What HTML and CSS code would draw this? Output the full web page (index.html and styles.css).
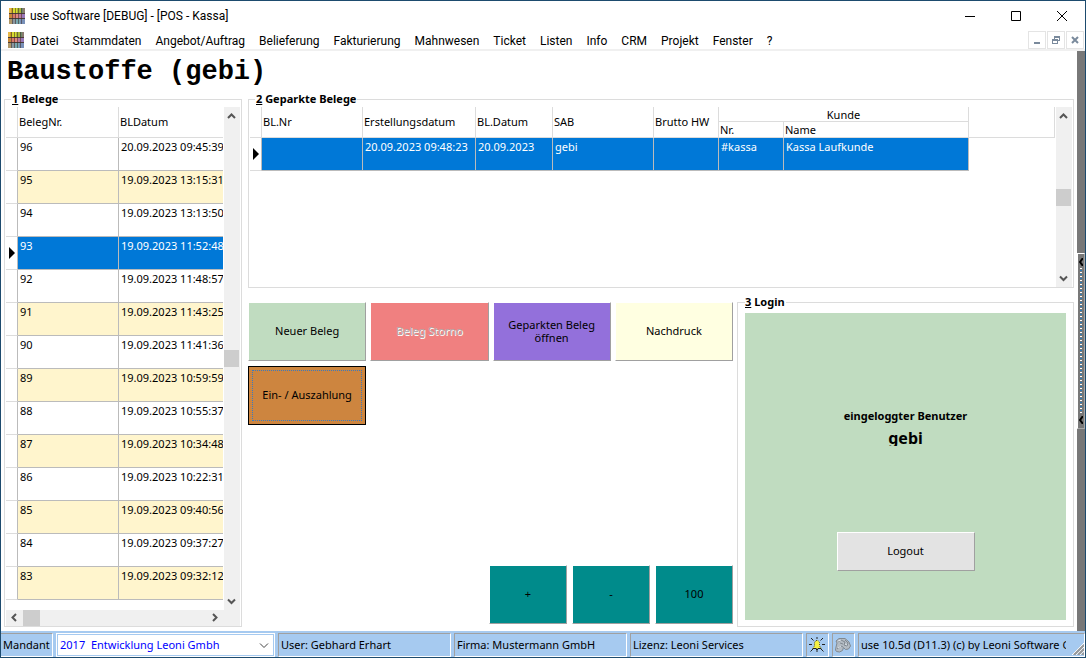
FILE: index.html
```html
<!DOCTYPE html>
<html lang="de">
<head>
<meta charset="utf-8">
<title>use Software [DEBUG] - [POS - Kassa]</title>
<link rel="stylesheet" href="styles.css">
</head>
<body>
<svg class="defs" aria-hidden="true">
  <symbol id="logo" viewBox="0 0 16 16">
    <rect width="16" height="16" fill="#8a8078"/>
    <path fill="#e8b848" d="M0 0h2v5H0z"/><path fill="#c9a02c" d="M2 0h2v5H2z"/><path fill="#d8dc30" d="M4 0h4v5H4z"/><path fill="#a8b838" d="M8 0h4v5H8z"/><path fill="#6d8a68" d="M12 0h2v5h-2z"/><path fill="#8a7a70" d="M14 0h2v5h-2z"/>
    <path fill="#c88838" d="M0 6h3v4H0z"/><path fill="#d87868" d="M3 6h4v4H3z"/><path fill="#e08880" d="M7 6h3v4H7z"/><path fill="#b878a0" d="M10 6h3v4h-3z"/><path fill="#9878b8" d="M13 6h3v4h-3z"/>
    <path fill="#b09868" d="M0 11h3v5H0z"/><path fill="#8a98a0" d="M3 11h4v5H3z"/><path fill="#78a8b0" d="M7 11h4v5H7z"/><path fill="#7890b8" d="M11 11h5v5h-5z"/>
    <path fill="#3c2c28" fill-opacity=".8" d="M0 5h16v1H0zM0 10h16v1H0z"/>
    <path fill="#3c2c28" fill-opacity=".55" d="M3 0h1v16H3zM6 0h1v16H6zM9 0h1v16H9zM12 0h1v16h-1z"/>
  </symbol>
  <symbol id="up" viewBox="0 0 16 17"><path fill="none" stroke="#555" stroke-width="2" d="M4 11l3.500-3.500L11 11"/></symbol>
  <symbol id="down" viewBox="0 0 16 17"><path fill="none" stroke="#555" stroke-width="2" d="M4 6.500L7.500 10 11 6.500"/></symbol>
  <symbol id="left" viewBox="0 0 17 16"><path fill="none" stroke="#555" stroke-width="2" d="M10 4L6.500 7.500 10 11"/></symbol>
  <symbol id="right" viewBox="0 0 17 16"><path fill="none" stroke="#555" stroke-width="2" d="M6 4l3.500 3.500L6 11"/></symbol>
  <symbol id="marker" viewBox="0 0 6 12"><path d="M0 0l6 6-6 6z"/></symbol>
</svg>
<div class="window">
  <header class="titlebar">
    <svg class="logo"><use href="#logo"/></svg>
    <span class="caption">use Software [DEBUG] - [POS - Kassa]</span>
    <button class="sysbtn" aria-label="Minimieren"><svg width="10" height="10"><path d="M0 5h10v1H0z"/></svg></button>
    <button class="sysbtn" aria-label="Maximieren"><svg width="10" height="10"><path fill="none" stroke="#000" d="M.5.5h9v9h-9z"/></svg></button>
    <button class="sysbtn" aria-label="Schließen"><svg width="10" height="10"><path stroke="#000" d="M0 0l10 10M10 0L0 10"/></svg></button>
  </header>
  <nav class="menubar">
    <svg class="logo"><use href="#logo"/></svg>
    <button>Datei</button><button>Stammdaten</button><button>Angebot/Auftrag</button><button>Belieferung</button><button>Fakturierung</button><button>Mahnwesen</button><button>Ticket</button><button>Listen</button><button>Info</button><button>CRM</button><button>Projekt</button><button>Fenster</button><button>?</button>
    <span class="mdi">
      <button aria-label="Fenster minimieren"><svg width="8" height="8"><path fill="#7a8a9c" d="M1 6h6v2H1z"/></svg></button>
      <button aria-label="Fenster wiederherstellen"><svg width="8" height="8"><path fill="#7a8a9c" d="M2 0h6v5H6V4h1V2H3v1H2zM0 3h6v5H0zM1 5v2h4V5z" fill-rule="evenodd"/></svg></button>
      <button aria-label="Fenster schließen"><svg width="8" height="8"><path stroke="#7a8a9c" stroke-width="2" d="M1 1l6 6M7 1L1 7"/></svg></button>
    </span>
  </nav>
  <div class="client">
    <main class="form">
      <h1>Baustoffe (gebi)</h1>
      <div class="columns">
        <fieldset class="group receipts">
          <legend><u>1</u> Belege</legend>
          <div class="scroller">
            <div class="viewport">
              <table class="grid">
                <colgroup><col class="c-mark"><col class="c-nr"><col></colgroup>
                <thead><tr><th></th><th>BelegNr.</th><th>BLDatum</th></tr></thead>
                <tbody>
                  <tr><td></td><td>96</td><td>20.09.2023 09:45:39</td></tr>
                  <tr><td></td><td>95</td><td>19.09.2023 13:15:31</td></tr>
                  <tr><td></td><td>94</td><td>19.09.2023 13:13:50</td></tr>
                  <tr class="selected"><td><svg class="marker"><use href="#marker"/></svg></td><td>93</td><td>19.09.2023 11:52:48</td></tr>
                  <tr><td></td><td>92</td><td>19.09.2023 11:48:57</td></tr>
                  <tr><td></td><td>91</td><td>19.09.2023 11:43:25</td></tr>
                  <tr><td></td><td>90</td><td>19.09.2023 11:41:36</td></tr>
                  <tr><td></td><td>89</td><td>19.09.2023 10:59:59</td></tr>
                  <tr><td></td><td>88</td><td>19.09.2023 10:55:37</td></tr>
                  <tr><td></td><td>87</td><td>19.09.2023 10:34:48</td></tr>
                  <tr><td></td><td>86</td><td>19.09.2023 10:22:31</td></tr>
                  <tr><td></td><td>85</td><td>19.09.2023 09:40:56</td></tr>
                  <tr><td></td><td>84</td><td>19.09.2023 09:37:27</td></tr>
                  <tr><td></td><td>83</td><td>19.09.2023 09:32:12</td></tr>
                </tbody>
              </table>
            </div>
            <div class="vbar"><svg><use href="#up"/></svg><i></i><b></b><i></i><svg><use href="#down"/></svg></div>
          </div>
          <div class="hbar"><svg><use href="#left"/></svg><b></b><i></i><svg><use href="#right"/></svg></div>
        </fieldset>
        <div class="workspace">
          <fieldset class="group parked">
            <legend><u>2</u> Geparkte Belege</legend>
            <div class="scroller">
              <div class="viewport">
                <table class="grid wide">
                  <colgroup><col class="c-mark"><col class="c-nr"><col class="c-created"><col class="c-date"><col class="c-sab"><col class="c-sum"><col class="c-cust"><col class="c-name"><col></colgroup>
                  <thead>
                    <tr><th rowspan="2"></th><th rowspan="2">BL.Nr</th><th rowspan="2">Erstellungsdatum</th><th rowspan="2">BL.Datum</th><th rowspan="2">SAB</th><th rowspan="2">Brutto HW</th><th colspan="2" class="band">Kunde</th><th rowspan="2"></th></tr>
                    <tr><th>Nr.</th><th>Name</th></tr>
                  </thead>
                  <tbody>
                    <tr class="selected"><td><svg class="marker"><use href="#marker"/></svg></td><td></td><td>20.09.2023 09:48:23</td><td>20.09.2023</td><td>gebi</td><td></td><td>#kassa</td><td>Kassa Laufkunde</td><td class="filler"></td></tr>
                  </tbody>
                </table>
              </div>
              <div class="vbar"><svg><use href="#up"/></svg><i></i><b></b><i></i><svg><use href="#down"/></svg></div>
            </div>
          </fieldset>
          <div class="lower">
            <div class="actions">
              <div class="tiles">
                <button class="tile green">Neuer Beleg</button>
                <button class="tile red" disabled>Beleg Storno</button>
                <button class="tile purple">Geparkten Beleg öffnen</button>
                <button class="tile cream">Nachdruck</button>
                <button class="tile orange"><span>Ein- / Auszahlung</span></button>
              </div>
              <div class="keys">
                <button class="tile teal">+</button>
                <button class="tile teal">-</button>
                <button class="tile teal">100</button>
              </div>
            </div>
            <fieldset class="group login">
              <legend><u>3</u> Login</legend>
              <div class="panel">
                <div class="who">eingeloggter Benutzer</div>
                <div class="user">gebi</div>
                <button class="logout">Logout</button>
              </div>
            </fieldset>
          </div>
        </div>
      </div>
    </main>
    <aside class="splitter">
      <div class="handle">
        <svg width="4" height="8"><path fill="none" stroke="#000" stroke-width="2" d="M4 0L1 4l3 4"/></svg>
        <span class="dots"></span>
        <svg width="4" height="8"><path fill="none" stroke="#000" stroke-width="2" d="M4 0L1 4l3 4"/></svg>
      </div>
    </aside>
  </div>
  <footer class="status">
    <label class="cell s-label" for="mandant">Mandant</label>
    <span class="combo">
      <select id="mandant"><option>2017&nbsp; Entwicklung Leoni Gmbh</option></select>
      <svg width="10" height="6"><path fill="none" stroke="#444" d="M1 .5l4 4 4-4"/></svg>
    </span>
    <span class="cell s-info">User: Gebhard Erhart</span>
    <span class="cell s-info">Firma: Mustermann GmbH</span>
    <span class="cell s-info">Lizenz: Leoni Services</span>
    <span class="cell s-icon"><svg width="16" height="16" viewBox="0 0 16 16"><path stroke="#222" d="M2 1l2.500 2.500M14 1l-2.500 2.500M0 7.500h3M13 7.500h3M1.500 14.500L4 12M14.500 14.500L12 12M8 0v2M8 13v2"/><path fill="#f4f040" stroke="#55552a" stroke-dasharray="1 1" d="M7 3.500h2l1.500 2v3.500l2 2.500h-9l2-2.500V5.500z"/><path fill="#222" d="M4 11h3v1H4zM9 11h3v1H9zM7 12h2v1H7z"/></svg></span>
    <span class="cell s-icon"><svg width="16" height="16" viewBox="0 0 16 16"><path fill="#b4bcc4" stroke="#808890" d="M1 10l1-4-1-2 3-2.500 6 0 4 3.500 1.500 4-2 3-3 .5-2-2-1 3-3 1.500-3-.5L.5 13z"/><path fill="none" stroke="#808890" d="M3 5l3-2 4 2-1 3 3 1 1-3-3-3M2 12l4-3 2 1M5 6l3 1"/><path stroke="#dde4ea" d="M3 4l3-1M3 11l3-2M10 7l2 1"/></svg></span>
    <span class="cell s-version"><span>use 10.5d (D11.3) (c) by Leoni Software GmbH</span><svg width="12" height="12"><path stroke="#fff" stroke-width="1" d="M0 12L12 0M4 12l8-8M8 12l4-4"/><path stroke="#999" stroke-width="2" d="M2 12L12 2M6 12l6-6M10 12l2-2"/></svg></span>
  </footer>
</div>
</body>
</html>
```
FILE: styles.css
```css
* { box-sizing: border-box; }
body { margin: 0; background: #fff; color: #000; font: 11px/13px "Noto Sans", sans-serif; }
button, select { font: inherit; color: inherit; padding: 0; border: 0; background: none; border-radius: 0; }
svg { display: block; }
.defs { position: absolute; width: 0; height: 0; }
.window { display: flex; flex-direction: column; min-height: 100vh; border: 1px solid #1d4b6e; }

.titlebar { display: flex; align-items: center; height: 29px; padding-left: 8px; font: 12px/16px Roboto, sans-serif; }
.logo { width: 16px; height: 16px; flex: none; }
.caption { flex: 1; padding-left: 5px; }
.sysbtn { width: 46px; height: 28px; display: grid; place-items: center; }

.menubar { display: flex; align-items: center; gap: 14px; height: 21px; padding: 1px 0 0 7px; border-bottom: 2px solid #f0f0f0; font: 12px/18px Roboto, sans-serif; white-space: nowrap; }
.menubar > button { padding-top: 2px; }
.menubar .logo { margin-right: -7px; }
.mdi { display: flex; gap: 1px; margin-left: auto; padding-right: 1px; }
.mdi button { width: 18px; height: 18px; border: 1px solid #e4e4e4; display: grid; place-items: center; }

.client { flex: 1; display: flex; }
.form { flex: 1; min-width: 0; display: flex; flex-direction: column; padding: 0 3px 4px; }
h1 { margin: 0; padding: 2px 3px 0; font: bold 27px/39px "Liberation Mono", monospace; }
.columns { flex: 1; display: flex; gap: 6px; }
.workspace { flex: 1; min-width: 0; display: flex; flex-direction: column; gap: 7px; }

.group { margin: 0; min-width: 0; padding: 0 1px; border: 1px solid #dcdcdc; display: flex; flex-direction: column; }
legend { margin-left: 5px; padding: 0 1px; font-weight: bold; line-height: 14px; }
.receipts { width: 238px; }
.scroller { flex: 1; min-height: 0; display: flex; padding-top: 1px; }
.parked .scroller { min-height: 181px; }
.viewport { flex: 1; min-width: 0; overflow: hidden; padding-right: 1px; }

.grid { width: 100%; table-layout: fixed; border-collapse: separate; border-spacing: 0; }
.grid th, .grid td { padding: 0 1px; overflow: hidden; white-space: nowrap; text-align: left; font-weight: normal; }
.grid th { height: 31px; padding-bottom: 2px; border-right: 1px solid #dcdcdc; border-bottom: 1px solid #dcdcdc; }
.receipts th:last-child, .receipts td:last-child { border-right: 0; }
.grid td { height: 33px; padding: 2px 0 0 2px; vertical-align: top; border-right: 1px solid #bbb; border-bottom: 1px solid #bbb; }
.grid td:first-child { padding: 0 0 0 3px; vertical-align: middle; border-bottom-color: #dcdcdc; }
.receipts tbody tr:nth-child(even) td:not(:first-child) { background: #fff5cd; }
.grid .selected td:not(:first-child) { background: #0078d7 !important; color: #fff; }
.grid .selected .filler { visibility: hidden; }
.wide th[rowspan] { height: 31px; }
.wide th:not([rowspan]) { height: 16px; padding-bottom: 0; }
.wide .band { height: 15px !important; text-align: center; }
.marker { width: 6px; height: 12px; }
.c-mark { width: 12px; }
.c-nr { width: 101px; }
.c-created { width: 113px; }
.c-date { width: 77px; }
.c-sab { width: 101px; }
.c-sum, .c-cust { width: 65px; }
.c-name { width: 185px; }

.vbar, .hbar { display: flex; background: #f0f0f0; }
.vbar { width: 16px; flex-direction: column; }
.vbar svg { width: 16px; height: 17px; }
.hbar svg { width: 17px; height: 16px; }
.hbar { padding-right: 16px; }
.vbar i, .hbar i { flex: 1; }
.vbar b { height: 17px; background: #cdcdcd; margin-right: 1px; }
.hbar b { width: 17px; background: #cdcdcd; }

.lower { flex: 1; display: grid; grid-template-columns: 485fr 337fr; gap: 4px; }
.actions { display: flex; flex-direction: column; justify-content: space-between; padding: 7px 0 3px; }
.tiles { display: grid; grid-template-columns: repeat(4, 1fr); gap: 5px 4px; }
.keys { display: flex; justify-content: flex-end; gap: 5px; }
.tile { height: 59px; padding: 0 12px 2px; border: 1px solid; border-color: #fff #a0a0a0 #a0a0a0 #fff; }
.keys .tile { width: 78px; }
.green { background: #c0dcc0; }
.red { background: #f08080; color: #b4a8a8; text-shadow: 1px 1px 0 #fff; }
.purple { background: #9370db; }
.cream { background: #ffffe1; }
.orange { padding: 3px; background: #cd853f; border-color: #000; }
.orange span { display: flex; align-items: center; justify-content: center; height: 100%; padding-bottom: 2px; border: 1px dotted #3a7abf; }
.teal { background: #008b8b; }

.login { padding: 0 7px 6px; }
.login legend { margin-left: 0; padding-left: 0; }
.panel { height: 307px; margin-top: 4px; background: #c0dcc0; display: flex; flex-direction: column; align-items: center; padding-top: 96px; }
.who { font-weight: bold; line-height: 14px; }
.user { margin-top: 7px; font-weight: bold; font-size: 16px; line-height: 16px; overflow: hidden; }
.logout { width: 138px; height: 39px; margin-top: 86px; padding-bottom: 2px; background: #e3e3e3; border: 1px solid; border-color: #fff #a0a0a0 #a0a0a0 #fff; }

.splitter { width: 8px; background: #787878; display: flex; flex-direction: column; justify-content: center; }
.handle { height: 176px; display: flex; flex-direction: column; align-items: flex-end; gap: 2px; padding: 4px 1px; border: 1px solid #a8a8a8; border-left-color: #fff; border-top-color: #fff; }
.dots { flex: 1; width: 2px; margin-right: 1px; background: repeating-linear-gradient(#fff 0 1px, #787878 1px 2px, #2a7ab8 2px 3px, #787878 3px 4px); }

.status { display: flex; gap: 3px; height: 26px; padding: 2px 0 0; background: #a6caf0; white-space: nowrap; }
.cell { display: flex; align-items: center; padding: 0 0 1px 2px; border: 1px solid; border-color: #a0a0a0 #fff #fff #a0a0a0; overflow: hidden; }
.s-label { width: 52px; border-left: 0; }
.combo { position: relative; width: 219px; display: flex; border: 1px solid #fff; }
.combo select { flex: 1; appearance: none; background: #fff; color: #00f; line-height: 17px; padding: 0 0 1px 3px; outline: 1px solid #a6caf0; outline-offset: -1px; }
.combo svg { position: absolute; right: 5px; top: 9px; pointer-events: none; }
.s-info { width: 173px; }
.s-icon { width: 23px; padding: 0 0 0 2px; }
.s-version { flex: 1; min-width: 0; align-items: flex-end; }
.s-version span { flex: 1; align-self: center; overflow: hidden; margin-right: 6px; }
.s-version svg { flex: none; }
```
